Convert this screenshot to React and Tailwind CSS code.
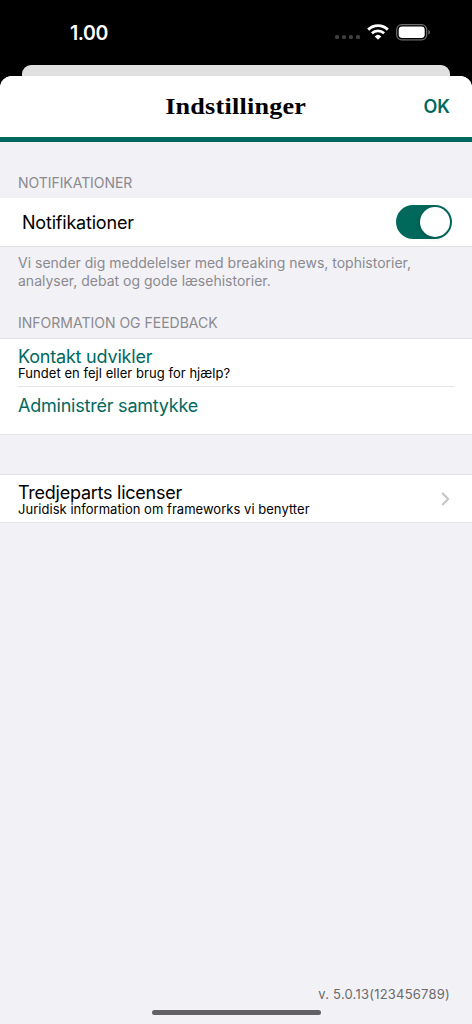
import { useState } from 'react';

const StatusBar = () => (
    <div className="flex h-[65px] items-start justify-between pl-[70px] pr-[41px] pt-[23px] text-white">
        <span className="text-[19.5px] font-semibold leading-[20px] tracking-[-0.4px]">1.00</span>
        <div className="flex h-[18px] items-center">
            <div className="mr-[7px] mt-[10px] flex gap-[3px]">
                {[0, 1, 2, 3].map((dot) => (
                    <span key={dot} className="h-[4px] w-[4px] rounded-[1.5px] bg-[#3f3f3f]" />
                ))}
            </div>
            <svg width="22" height="16" viewBox="0 0 22 16" fill="none" stroke="white" className="mr-[7px]">
                <path d="M1.2 5.6a14 14 0 0 1 19.6 0" strokeWidth="2.9" />
                <path d="M4.9 9.3a8.7 8.7 0 0 1 12.2 0" strokeWidth="2.7" />
                <path d="M11 15.7 7.7 12.4a4.8 4.8 0 0 1 6.6 0Z" fill="white" stroke="none" />
            </svg>
            <svg width="35" height="17" viewBox="0 0 35 17" fill="none">
                <rect x="0.7" y="0.7" width="30" height="15.2" rx="5" stroke="#6b6b6b" strokeWidth="1.2" />
                <rect x="2.7" y="2.6" width="26" height="11.4" rx="3.4" fill="white" />
                <path d="M32.3 5.8c2.2 1 2.2 4 0 5Z" fill="#6b6b6b" />
            </svg>
        </div>
    </div>
);

const Switch = ({ checked, onChange }) => (
    <button
        role="switch"
        aria-checked={checked}
        aria-label="Notifikationer"
        onClick={() => onChange(!checked)}
        className={`flex h-[34px] w-[56px] items-center rounded-full p-[2px] ${checked ? 'justify-end bg-[#00695c]' : 'justify-start bg-[#e9e9ea]'}`}
    >
        <span className="h-[30px] w-[30px] rounded-full bg-white shadow-[-1px_1px_4px_rgba(0,0,0,0.2)]" />
    </button>
);

const App = () => {
    const [notifications, setNotifications] = useState(true);

    return (
        <div className="flex h-[1024px] w-[472px] flex-col overflow-hidden bg-black font-['Inter',sans-serif] text-black">
            <StatusBar />
            {/* Edge of the page behind the sheet */}
            <div className="mx-[22px] h-[11px] shrink-0 rounded-t-[9px] bg-[#e0e0e0]" />

            <div className="flex flex-1 flex-col overflow-hidden rounded-t-[12px] bg-[#f2f1f6]">
                <header className="grid h-[66px] shrink-0 grid-cols-[1fr_auto_1fr] items-start border-b-[5px] border-[#00695f] bg-white pt-[15px]">
                    <h1 className="col-start-2 scale-x-[1.09] font-['Liberation_Serif',serif] text-[24px] font-bold leading-[30px] tracking-[0.2px]">
                        Indstillinger
                    </h1>
                    <button className="justify-self-end pr-[22px] text-[18px] font-semibold leading-[32px] text-[#00695f]">OK</button>
                </header>

                <h2 className="pl-[18px] pt-[32px] text-[14px] leading-[18px] tracking-[-0.05px] text-[#8a8a8e]">NOTIFIKATIONER</h2>
                <div className="mt-[6px] flex h-[48px] items-center justify-between bg-white pl-[22px] pr-[20px]">
                    <span className="pt-[2px] text-[18px] leading-[24px] tracking-[-0.2px]">Notifikationer</span>
                    <Switch checked={notifications} onChange={setNotifications} />
                </div>
                <p className="border-t border-[#e1e1e4] pl-[18px] pt-[7px] text-[14px] leading-[17.5px] text-[#8a8a8e]">
                    Vi sender dig meddelelser med breaking news, tophistorier,
                    <br />
                    analyser, debat og gode læsehistorier.
                </p>

                <h2 className="mt-[25px] pl-[18px] text-[14px] leading-[18px] text-[#8a8a8e]">INFORMATION OG FEEDBACK</h2>
                <div className="mt-[6px] border-y border-[#e3e3e6] bg-white pl-[18px] pr-[18px]">
                    <div className="flex h-[48px] flex-col border-b border-[#e5e5e7] pt-[8px]">
                        <span className="text-[18px] leading-[20px] tracking-[-0.2px] text-[#00695f]">Kontakt udvikler</span>
                        <span className="text-[13px] leading-[13px] tracking-[0.05px]">Fundet en fejl eller brug for hjælp?</span>
                    </div>
                    <div className="flex h-[47px] flex-col pt-[9px]">
                        <span className="text-[18px] leading-[20px] tracking-[-0.22px] text-[#00695f]">Administrér samtykke</span>
                    </div>
                </div>

                <div className="mt-[39px] flex h-[49px] items-center justify-between border-y border-[#e3e3e6] bg-white pl-[18px] pr-[22px]">
                    <div className="flex flex-col pt-[1px]">
                        <span className="text-[18px] leading-[20px] tracking-[-0.25px]">Tredjeparts licenser</span>
                        <span className="text-[13px] leading-[13px] tracking-[0.03px]">Juridisk information om frameworks vi benytter</span>
                    </div>
                    <svg width="9" height="14" viewBox="0 0 9 14" fill="none" stroke="#c4c4c7" strokeWidth="2">
                        <path d="m1.2 1 6 6-6 6" />
                    </svg>
                </div>

                <footer className="mt-auto flex flex-col">
                    <span className="self-end pr-[22px] text-[13px] leading-[16px] tracking-[0.22px] text-[#6b6b6e]">v. 5.0.13(123456789)</span>
                    <span className="mb-[9px] mt-[8px] h-[5px] w-[169px] self-center rounded-full bg-[#626264]" />
                </footer>
            </div>
        </div>
    );
};

export default App;
